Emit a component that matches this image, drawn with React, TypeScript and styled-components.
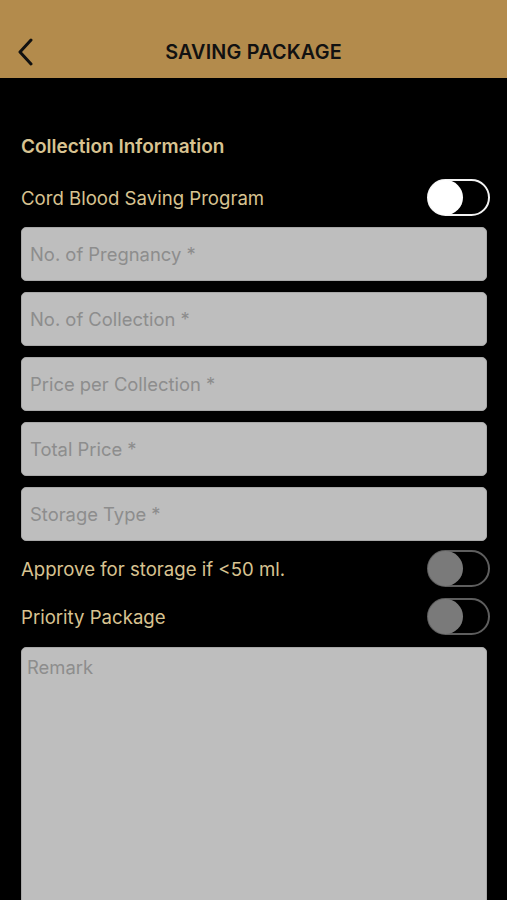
import styled, { createGlobalStyle } from 'styled-components';

const GlobalStyle = createGlobalStyle`
  html, body {
    margin: 0;
    padding: 0;
    background: #000000;
  }
  * {
    box-sizing: border-box;
  }
`;

const Page = styled.div`
  width: 507px;
  height: 900px;
  background: #000000;
  font-family: Inter, 'Liberation Sans', sans-serif;
  overflow: hidden;
`;

const Header = styled.header`
  height: 78px;
  background: #b38b4c;
  padding-top: 26px;
  position: relative;
  display: flex;
  align-items: center;
  justify-content: center;

  h1 {
    margin: 0;
    font-size: 19.8px;
    font-weight: 600;
    color: #111111;
    letter-spacing: 0.2px;
  }
`;

const BackButton = styled.button`
  position: absolute;
  left: 12px;
  top: 36px;
  width: 28px;
  height: 32px;
  padding: 0;
  border: none;
  background: transparent;
  display: flex;
  align-items: center;
  justify-content: center;
`;

const Form = styled.div`
  padding: 58px 20px 0 21px;
  display: flex;
  flex-direction: column;
`;

const SectionTitle = styled.h2`
  margin: 0;
  height: 22px;
  line-height: 22px;
  font-size: 19px;
  font-weight: 600;
  color: #d8c391;
`;

const ToggleRow = styled.div<{ $top: number }>`
  margin-top: ${(p) => p.$top}px;
  height: 37px;
  display: flex;
  align-items: center;
  justify-content: space-between;

  span {
    font-size: 18.6px;
    color: #d8c391;
  }
`;

const Switch = styled.div<{ $active?: boolean }>`
  width: 63px;
  height: 37px;
  border-radius: 19px;
  border: 2px solid ${(p) => (p.$active ? '#f2f2f2' : '#5e5e5e')};
  background: #000000;
  position: relative;
  margin-right: -3px;

  &::after {
    content: '';
    position: absolute;
    left: -1px;
    top: -1px;
    width: 35px;
    height: 35px;
    border-radius: 50%;
    background: ${(p) => (p.$active ? '#ffffff' : '#7a7a7a')};
  }
`;

const Fields = styled.div`
  margin-top: 11px;
  display: flex;
  flex-direction: column;
  gap: 11px;
`;

const Field = styled.input`
  width: 466px;
  height: 54px;
  border: 1px solid #a8a8a8;
  border-radius: 5px;
  background: #bebebe;
  padding: 0 8px;
  font-family: inherit;
  font-size: 18.4px;
  color: #333333;
  outline: none;

  &::placeholder {
    color: #8d8d8d;
  }
`;

const Remark = styled.textarea`
  margin-top: 12px;
  width: 466px;
  height: 300px;
  border: 1px solid #a8a8a8;
  border-radius: 5px;
  background: #bebebe;
  padding: 8px 5px;
  font-family: inherit;
  font-size: 18.4px;
  resize: none;
  outline: none;

  &::placeholder {
    color: #8d8d8d;
  }
`;

const App = () => {
  return (
    <>
      <GlobalStyle />
      <Page>
        <Header>
          <BackButton aria-label="Back">
            <svg width="20" height="28" viewBox="0 0 20 28" fill="none">
              <path d="M15 2 L4 14 L15 26" stroke="#111111" strokeWidth="3" strokeLinecap="round" strokeLinejoin="round" />
            </svg>
          </BackButton>
          <h1>SAVING PACKAGE</h1>
        </Header>
        <Form>
          <SectionTitle>Collection Information</SectionTitle>
          <ToggleRow $top={21}>
            <span>Cord Blood Saving Program</span>
            <Switch $active />
          </ToggleRow>
          <Fields>
            {['No. of Pregnancy *', 'No. of Collection *', 'Price per Collection *', 'Total Price *', 'Storage Type *'].map((el, i) => (
              <Field key={i} placeholder={el} />
            ))}
          </Fields>
          <ToggleRow $top={9}>
            <span>Approve for storage if &lt;50 ml.</span>
            <Switch />
          </ToggleRow>
          <ToggleRow $top={11}>
            <span>Priority Package</span>
            <Switch />
          </ToggleRow>
          <Remark placeholder="Remark" />
        </Form>
      </Page>
    </>
  );
};

export default App;
